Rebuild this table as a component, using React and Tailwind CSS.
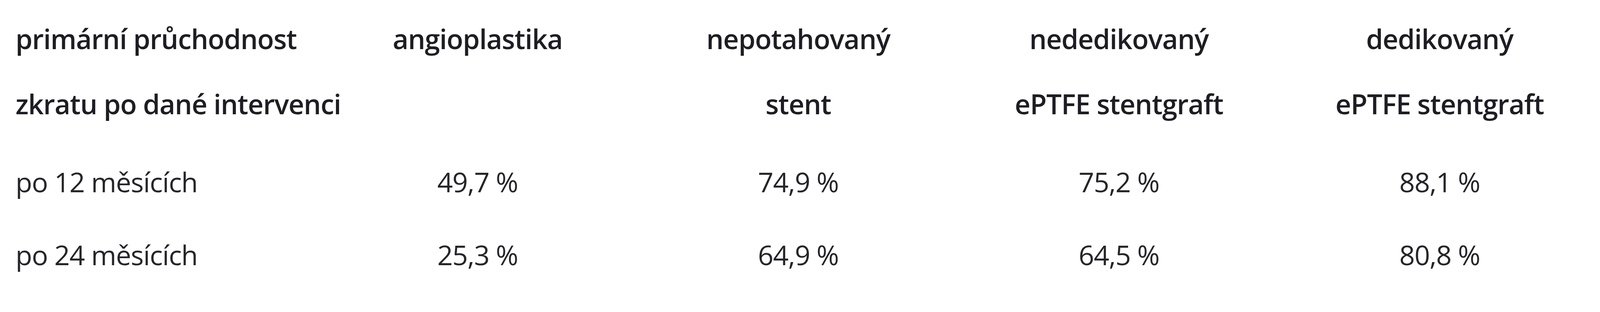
const headers = [
  ['primární průchodnost', 'zkratu po dané intervenci'],
  ['angioplastika', ''],
  ['nepotahovaný', 'stent'],
  ['nededikovaný', 'ePTFE stentgraft'],
  ['dedikovaný', 'ePTFE stentgraft'],
];

const rows = [
  ['po 12 měsících', '49,7 %', '74,9 %', '75,2 %', '88,1 %'],
  ['po 24 měsících', '25,3 %', '64,9 %', '64,5 %', '80,8 %'],
];

// column widths follow the reference proportions, so the table spans the window
const cols = 'grid w-full grid-cols-[minmax(0,1385fr)_repeat(4,minmax(0,1400fr))]';

export default function App() {
  return (
    <div className="h-[800px] w-full overflow-hidden bg-white text-[#1f1d24] font-['Open_Sans',sans-serif] text-[1.704vw] tracking-[-0.029vw]">
      <div className={`${cols} pt-[15px] mb-[23px] font-semibold leading-[167px]`}>
        {headers.map((h, i) => (
          <div key={i} className={i === 0 ? 'pl-[0.97vw] whitespace-nowrap' : 'text-center whitespace-nowrap'}>
            <div className="h-[167px]">{h[0]}</div>
            <div className="h-[167px]">{h[1]}</div>
          </div>
        ))}
      </div>
      {rows.map((r, ri) => (
        <div key={ri} className={`${cols} leading-[187px] text-[#26252a]`}>
          {r.map((c, ci) => (
            <div key={ci} className={ci === 0 ? 'pl-[0.97vw] whitespace-nowrap' : 'text-center whitespace-nowrap'}>
              {c}
            </div>
          ))}
        </div>
      ))}
    </div>
  );
}
